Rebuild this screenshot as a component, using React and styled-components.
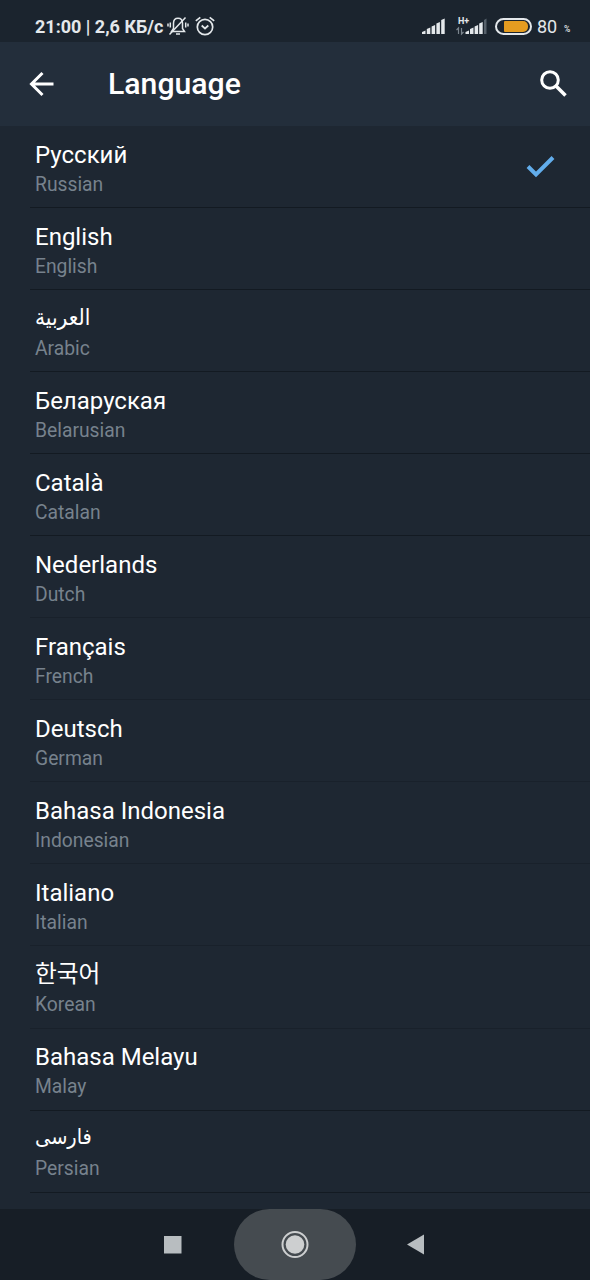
import React from 'react';
import styled, { createGlobalStyle } from 'styled-components';

const GlobalStyle = createGlobalStyle`
  * {
    box-sizing: border-box;
  }
  body {
    margin: 0;
    background-color: #1e2731;
    font-family: Roboto, 'DejaVu Sans Condensed', 'Noto Sans CJK KR', sans-serif;
  }
`;
const Screen = styled.div`
  width: 590px;
  height: 1280px;
  display: flex;
  flex-direction: column;
  overflow: hidden;
  background-color: #1e2732;
`;
const StatusBar = styled.div`
  flex: none;
  height: 42px;
  padding: 11px 19px 0 35px;
  display: flex;
  align-items: flex-start;
  justify-content: space-between;
  background-color: #1b242e;
  color: #e4e8eb;
`;
const StatusGroup = styled.div`
  height: 31px;
  display: flex;
  align-items: flex-start;
`;
const Clock = styled.span`
  width: 129px;
  margin-right: 3px;
  font-size: 18px;
  font-weight: 700;
  line-height: 31px;
  white-space: nowrap;
`;
const StatusIcon = styled.svg`
  flex: none;
  width: ${(props) => props.$width}px;
  height: 32px;
  margin-right: ${(props) => props.$gap || 0}px;
`;
const NetworkType = styled.text`
  font-size: 9px;
  font-weight: 700;
  fill: #e4e8eb;
`;
const Battery = styled.div`
  width: 37px;
  height: 17px;
  margin: 7px 5px 0 0;
  padding: 1px 2px 1px 7px;
  border: 2px solid #e4e8eb;
  border-radius: 9px;
`;
const BatteryLevel = styled.div`
  height: 11px;
  border-radius: 1px 5px 5px 1px;
  background-color: #e59c20;
`;
const Percent = styled.span`
  width: 20px;
  margin-right: 7px;
  font-size: 18px;
  line-height: 31px;
`;
const PercentSign = styled.span`
  width: 7px;
  font-size: 8.5px;
  font-weight: 500;
  line-height: 37px;
`;
const Header = styled.header`
  flex: none;
  height: 84px;
  padding: 0 22px 0 27px;
  display: flex;
  align-items: center;
  background-color: #232e3b;
  color: #fff;
`;
const Title = styled.h1`
  flex: 1;
  margin: 0 0 0 51px;
  font-size: 30.2px;
  font-weight: 500;
  line-height: 34px;
`;
const List = styled.ul`
  flex: 1;
  min-height: 0;
  margin: 0;
  padding: 0 0 0 30px;
  overflow: hidden;
  list-style: none;
`;
const Item = styled.li`
  height: 82.06px;
  padding: 0 34px 0 5px;
  display: flex;
  align-items: center;
  justify-content: space-between;
  border-bottom: 1px solid ${(props) => (props.$faint ? '#19212b' : '#131a22')};
`;
const Names = styled.div`
  height: 81px;
  padding-top: 13.7px;
`;
const Name = styled.div`
  height: 30px;
  color: #fff;
  font-size: ${(props) => props.$size || 24}px;
  line-height: ${(props) => props.$lineHeight || 30}px;
  white-space: nowrap;
`;
const EnglishName = styled.div`
  margin-top: 3px;
  color: #77828d;
  font-size: 19.3px;
  line-height: 24px;
`;
const NavBar = styled.nav`
  flex: none;
  height: 71px;
  padding-left: 112px;
  display: flex;
  background-color: #171e26;
`;
const NavButton = styled.div`
  width: 122px;
  height: 71px;
  border-radius: 36px;
  background-color: ${(props) => (props.$pressed ? '#454b50' : 'transparent')};
`;

const languages = [
  { name: 'Русский', english: 'Russian', selected: true },
  { name: 'English', english: 'English' },
  { name: 'العربية', english: 'Arabic', size: 22.5, lineHeight: 26 },
  { name: 'Беларуская', english: 'Belarusian' },
  { name: 'Català', english: 'Catalan' },
  { name: 'Nederlands', english: 'Dutch', faint: true },
  { name: 'Français', english: 'French', faint: true },
  { name: 'Deutsch', english: 'German', faint: true },
  { name: 'Bahasa Indonesia', english: 'Indonesian', faint: true },
  { name: 'Italiano', english: 'Italian', faint: true },
  { name: '한국어', english: 'Korean', size: 23.7, lineHeight: 28, faint: true },
  { name: 'Bahasa Melayu', english: 'Malay' },
  { name: 'فارسی', english: 'Persian', size: 21.5, lineHeight: 26 },
];

function SilentIcon() {
  return (
    <StatusIcon $width={22} $gap={6} viewBox='0 0 22 32' fill='none' stroke='#e4e8eb' strokeWidth='1.5'>
      <path d='M4.500 20.500h13l-2-3v-5.200c0-3-1.700-5-4.500-5s-4.500 2-4.500 5v5.200z' />
      <path d='M9 23h4M2.500 23.500L18.500 6.500M3.300 11.500v5M1 12.500v3M18.700 11.500v5M21 12.500v3' />
    </StatusIcon>
  );
}
function AlarmIcon() {
  return (
    <StatusIcon $width={20} viewBox='0 0 20 32' fill='none' stroke='#e4e8eb' strokeWidth='1.700'>
      <circle cx='10' cy='16' r='7.700' />
      <path d='M6.700 14.500l3.300 3 3.300-3M.800 9.800l4.500-3.500M19.200 9.800l-4.500-3.500' />
    </StatusIcon>
  );
}
function SignalIcon() {
  return (
    <StatusIcon $width={23} $gap={11} viewBox='0 0 23 32' fill='#e4e8eb'>
      <path d='M0 23v-2l3.500-1.500v3.500zM4.800 23v-5l3.500-1.500v6.500zM9.600 23v-7.500l3.500-1.500v9zM14.400 23v-10.500l3.500-1.500v12zM19.200 23v-14l3.500-1.500v15.500z' />
    </StatusIcon>
  );
}
function MobileDataIcon() {
  return (
    <StatusIcon $width={31} $gap={8} viewBox='0 0 31 32' fill='#e4e8eb'>
      <NetworkType x='2' y='12.500'>H+</NetworkType>
      <path d='M2.500 23v-6l-2 2M5.500 17v6l2-2' fill='none' stroke='#7b858e' strokeWidth='1.200' />
      <path d='M9.500 23v-2l3.500-1.500v3.500zM14 23v-5l3.500-1.500v6.500zM18.600 23v-7.500l3.500-1.500v9zM23.200 23v-10.500l3.500-1.500v12z' />
      <path d='M28 23v-14l2.500-1.500v15.500z' fill='#56606a' />
    </StatusIcon>
  );
}

function App() {
  return (
    <Screen>
      <GlobalStyle />
      <StatusBar>
        <StatusGroup>
          <Clock>21:00 | 2,6 КБ/с</Clock>
          <SilentIcon />
          <AlarmIcon />
        </StatusGroup>
        <StatusGroup>
          <SignalIcon />
          <MobileDataIcon />
          <Battery>
            <BatteryLevel />
          </Battery>
          <Percent>80</Percent>
          <PercentSign>%</PercentSign>
        </StatusGroup>
      </StatusBar>

      <Header>
        <svg width='30' height='30' viewBox='0 0 30 30' fill='none' stroke='#fff' strokeWidth='3'>
          <path d='M26.500 15H5M15.500 4L4.500 15l11 11' />
        </svg>
        <Title>Language</Title>
        <svg width='30' height='30' viewBox='0 0 30 30' fill='none' stroke='#fff' strokeWidth='3'>
          <circle cx='12' cy='11' r='8.300' />
          <path d='M18 17l9.500 9.500' strokeWidth='3.500' />
        </svg>
      </Header>

      <List>
        {languages.map((language) => (
          <Item key={language.english} $faint={language.faint}>
            <Names>
              <Name $size={language.size} $lineHeight={language.lineHeight}>
                {language.name}
              </Name>
              <EnglishName>{language.english}</EnglishName>
            </Names>
            {language.selected && (
              <svg width='30' height='24' viewBox='0 0 30 24' fill='none' stroke='#62adeb' strokeWidth='4'>
                <path d='M2 11.500l8 8L27 2.500' />
              </svg>
            )}
          </Item>
        ))}
      </List>

      <NavBar>
        <NavButton>
          <svg width='122' height='71'>
            <rect x='52' y='27' width='17.500' height='17.500' fill='#b8bdc0' />
          </svg>
        </NavButton>
        <NavButton $pressed>
          <svg width='122' height='71'>
            <circle cx='61' cy='35.500' r='12.500' fill='none' stroke='#cdcfd0' strokeWidth='2' />
            <circle cx='61' cy='35.500' r='9.300' fill='#cdcfd0' />
          </svg>
        </NavButton>
        <NavButton>
          <svg width='122' height='71'>
            <path d='M51 35.500l17-10v20z' fill='#b8bdc0' />
          </svg>
        </NavButton>
      </NavBar>
    </Screen>
  );
}

export default App;
